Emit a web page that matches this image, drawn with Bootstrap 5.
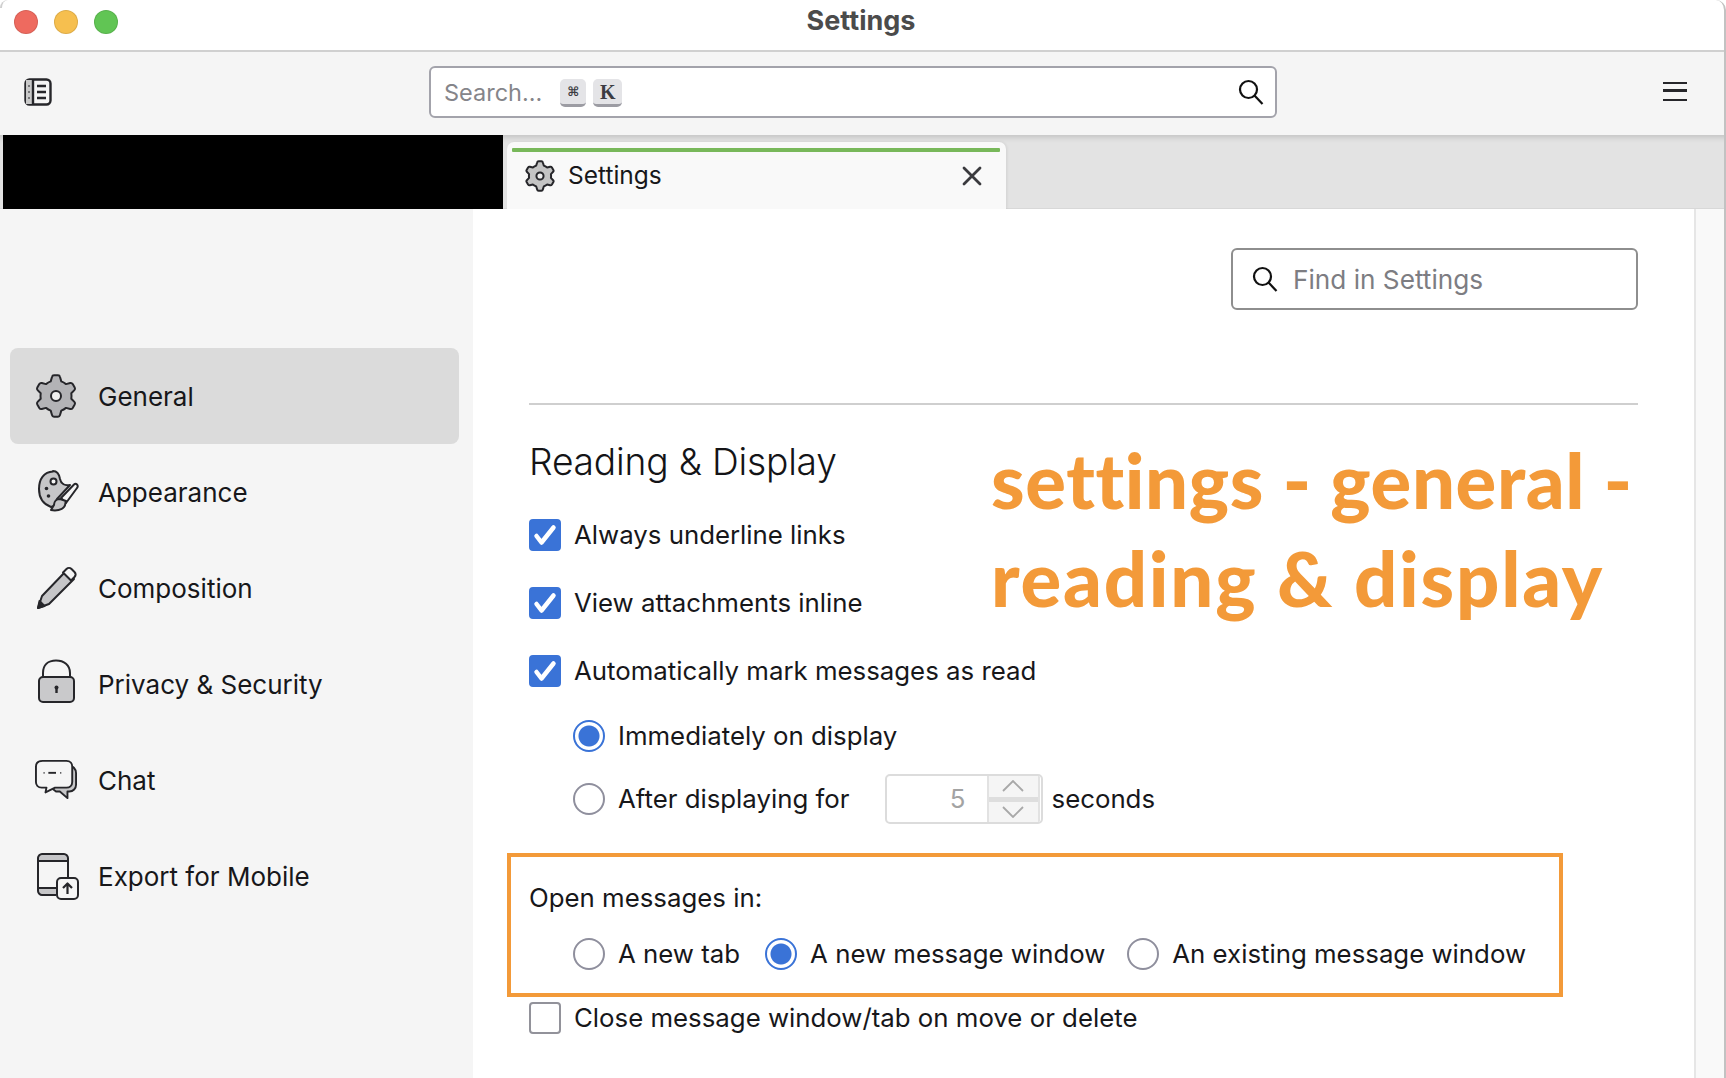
<!DOCTYPE html>
<html lang="en">
<head>
<meta charset="utf-8">
<title>Settings</title>
<link href="https://cdn.jsdelivr.net/npm/bootstrap@5.3.0/dist/css/bootstrap.min.css" rel="stylesheet">
<style>
html,body{height:100%;overflow:hidden;}
body{font-family:Inter,"Liberation Sans",sans-serif;font-size:25.8px;color:#17171a;background:#fff;}
.app-win{height:1078px;width:1726px;overflow:hidden;position:relative;}
.win-frame{position:absolute;top:0;right:0;bottom:0;width:14px;border-right:2px solid #c2c2c2;border-top-right-radius:10px;pointer-events:none;}
.win-corner{position:absolute;top:0;left:0;width:8px;height:8px;border-left:2px solid #cfcfcf;border-top-left-radius:8px;}
.title-bar{height:52px;border-bottom:2px solid #d0d0d0;background:#fff;display:grid;grid-template-columns:1fr auto 1fr;align-items:center;padding:0 0 7px 14px;}
.lights{gap:16px;}
.light{width:24px;height:24px;border-radius:50%;border:1px solid rgba(0,0,0,.1);}
.light-r{background:#ee6a5f;}.light-y{background:#f6bf4f;}.light-g{background:#61c554;}
.win-title{font-size:27px;font-weight:700;color:#4b4b4b;line-height:1;margin-left:-18px;padding-bottom:2px;}
.tool-bar{height:83px;background:#f5f5f5;padding:0 39px 3px 24px;}
.tool-side{width:405px;}
.omni{width:848px;height:52px;background:#fff;border:2px solid #a3a3ab;border-radius:6px;padding:2px 11px 0 13px;color:#85858a;font-size:23.5px;}
.key{height:28px;border-radius:5px;background:#e4e4e7;border-bottom:3px solid #9c9ca3;color:#3c3c42;font-size:15px;line-height:1;font-weight:700;display:flex;align-items:center;justify-content:center;}
.key-a{width:26px;margin-left:18px;font-family:"DejaVu Sans",sans-serif;font-size:13px;}
.key-b{width:29px;margin-left:7px;font-family:"Liberation Serif",serif;font-size:20px;}
.omni-ic{width:26px;height:26px;margin-top:-3px;}
.menu-btn{width:24px;height:19px;border-top:2.500px solid #26262a;border-bottom:2.500px solid #26262a;position:relative;margin-top:-2px;}
.menu-btn::after{content:"";position:absolute;left:0;right:0;top:5.500px;height:2.500px;background:#26262a;}
.tab-strip{height:74px;background:#e3e3e3;box-shadow:inset 0 7px 6px -5px rgba(0,0,0,.16);border-bottom:1px solid #d8d8d8;padding-left:3px;}
.redacted{width:500px;height:74px;background:#000;margin-bottom:-1px;}
.tab-item{width:499px;height:67px;margin:0 0 -1px 4px;background:#f9f9f9;border-radius:7px 7px 0 0;padding:6px 6px 0 5px;box-shadow:1px 0 3px rgba(0,0,0,.08);}
.tab-line{height:4px;background:#78b85a;border-radius:1px;}
.tab-body{padding:0 18px 0 13px;height:48px;font-size:24.500px;}
.tab-body span{margin-left:13px;line-height:1;padding-bottom:2px;}
.main-area{height:869px;}
.side-nav{width:473px;background:#f5f5f5;padding:139px 14px 0 10px;flex:none;}
.nav-row{height:96px;border-radius:8px;padding-left:25px;font-size:26px;color:#17171a;gap:21px;}
.nav-row.on{background:#dbdbdb;}
.nav-ic{width:42px;height:44px;flex:none;overflow:visible;}
.pane{flex:1;background:#fff;padding:39px 56px 0 56px;position:relative;}
.find{width:407px;height:62px;border:2px solid #8e8e8e;border-radius:6px;margin-left:auto;padding:2px 0 0 19px;color:#7d7d82;font-size:26.2px;gap:15px;}
.find svg{margin-top:-2px;}
.rule{height:2px;background:#cfcfcf;margin:93px 0 0;opacity:1;border:0;}
.sec-title{font-size:37.200px;font-weight:300;line-height:1;margin:38px 0 0;color:#141417;letter-spacing:-.2px;}
.line{height:32px;line-height:32px;gap:13px;}
.form-check-input.chk{width:32px;height:32px;margin:0;border:2px solid #92929a;border-radius:4px;flex:none;background-size:32px;}
.form-check-input.chk:checked{background-color:#3a73d7;border-color:#3a73d7;background-image:url("data:image/svg+xml,%3csvg xmlns='http://www.w3.org/2000/svg' viewBox='0 0 32 32'%3e%3cpath fill='none' stroke='%23fff' stroke-width='4.500' stroke-linecap='round' stroke-linejoin='round' d='M7.500 17l5 6.500L24.500 8.500'/%3e%3c/svg%3e");}
.form-check-input.rad{width:32px;height:32px;margin:0;border:2px solid #8f8f9d;flex:none;background-color:#fff;}
.form-check-input.rad:checked{border-color:#3a73d7;background-color:#fff;background-image:radial-gradient(circle,#3a73d7 0,#3a73d7 10px,#fff 11px);}
.stack-a{margin-top:39px;}
.stack-b{margin-top:36px;}
.ind{padding-left:44px;}
.opt-first{margin-top:33px;}
.opt-gap{margin-top:31px;}
.stepper{width:158px;height:50px;flex:none;border:2px solid #dcdcdc;border-radius:5px;margin:0 -4px 0 22px;color:#a3a3a3;overflow:hidden;}
.step-val{flex:1;text-align:right;padding-right:21px;line-height:46px;}
.step-btns{width:53px;border-left:2px solid #e2e2e2;background:#f5f5f5;border-right:2px solid #e2e2e2;margin-right:1px;}
.step-btn{flex:1;display:flex;align-items:center;justify-content:center;}
.step-btn+.step-btn{border-top:5px solid #dedede;}
.marked{border:4px solid #f39a39;width:1056px;height:144px;margin:38px 0 0 -22px;padding:25px 0 0 18px;}
.marked-label{line-height:32px;}
.radio-row{margin-top:24px;padding-left:44px;}
.radio-row .line + .line{margin-left:22px;}
.radio-row .line:first-child{margin-right:3px;}
.after-box{margin-top:5px;}
.annot{position:absolute;left:518px;top:222px;font-family:Lato,sans-serif;font-weight:900;font-size:76px;line-height:98px;color:#f39a39;white-space:nowrap;font-variant-ligatures:none;}
.annot-a{display:block;letter-spacing:.6px;}
.annot-b{display:block;letter-spacing:1.750px;}
.scroll-gut{width:32px;background:#f9f9f9;border-left:2px solid #e6e6e6;flex:none;}
</style>
</head>
<body>
<div class="app-win">
  <div class="title-bar">
    <div class="d-flex lights"><span class="light light-r"></span><span class="light light-y"></span><span class="light light-g"></span></div>
    <div class="win-title">Settings</div>
    <div></div>
  </div>
  <div class="tool-bar d-flex align-items-center">
    <div class="tool-side">
      <svg width="28" height="28" viewBox="0 0 28 28" fill="none" stroke="#26262a" stroke-width="2.4" class="d-block"><rect x="1.5" y="1.5" width="25" height="25" rx="4"/><rect x="2" y="2" width="7" height="24" fill="#c9c9c9" stroke="none"/><path d="M9 2v24M13 8h9M13 14h9M13 20h9"/><path d="M5 7.500v1M5 13.500v1M5 19.500v1" stroke-width="2"/></svg>
    </div>
    <div class="omni d-flex align-items-center">
      <span>Search...</span><span class="key key-a">⌘</span><span class="key key-b">K</span>
      <svg class="omni-ic ms-auto" viewBox="0 0 26 26" fill="none" stroke="#111" stroke-width="2.2"><circle cx="10.500" cy="10.500" r="8.500"/><path d="M16.500 16.500l8 8.500"/></svg>
    </div>
    <div class="ms-auto menu-btn"></div>
  </div>
  <div class="tab-strip d-flex align-items-end">
    <div class="redacted"></div>
    <div class="tab-item">
      <div class="tab-line"></div>
      <div class="tab-body d-flex align-items-center">
        <svg width="30" height="32" viewBox="0 0 42 44" fill="#c4c4c4" stroke="#26262a" stroke-width="2.8" stroke-linejoin="round"><use href="#gear-shape"/></svg>
        <span>Settings</span>
        <svg class="ms-auto" width="20" height="20" viewBox="0 0 20 20" stroke="#3a3a3e" stroke-width="2.8" fill="none" stroke-linecap="round"><path d="M2 2l16 16M18 2L2 18"/></svg>
      </div>
    </div>
  </div>
  <div class="main-area d-flex">
    <nav class="side-nav">
      <div class="nav-row on d-flex align-items-center">
        <svg class="nav-ic" viewBox="0 0 42 44" fill="#b3b3b6" stroke="#26262a" stroke-width="2" stroke-linejoin="round"><g id="gear-shape"><path d="M15.700 7.400L17 3Q17.400 1.300 19 1.300H23Q24.600 1.300 25 3L26.300 7.400Q28.700 8.300 31 10.100L35.200 9Q36.800 8.600 37.700 10L39.700 13.500Q40.500 15 39.400 16.100L36.300 19.300Q36.700 22 36.300 24.700L39.400 27.900Q40.500 29 39.700 30.500L37.700 34Q36.800 35.400 35.200 35L31 33.900Q28.700 35.700 26.300 36.600L25 41Q24.600 42.700 23 42.700H19Q17.400 42.700 17 41L15.700 36.600Q13.300 35.700 11 33.900L6.800 35Q5.200 35.400 4.300 34L2.300 30.500Q1.500 29 2.600 27.900L5.700 24.700Q5.300 22 5.700 19.300L2.600 16.100Q1.500 15 2.300 13.500L4.300 10Q5.200 8.600 6.800 9L11 10.100Q13.300 8.300 15.700 7.400Z"/><circle cx="21" cy="22" r="5" fill="#efefef"/></g></svg>
        <span>General</span>
      </div>
      <div class="nav-row d-flex align-items-center">
        <svg class="nav-ic" viewBox="-1 0 42 44" fill="none" stroke="#26262a" stroke-width="2" stroke-linejoin="round"><path d="M17 1.500C8 2 3 9 3 19c0 8 4 15 12 18l3-1 3-7 13-14c-5 1-9-1-10-6-1-6-3-8-7-8z" fill="#c6c6c8"/><circle cx="17.500" cy="11.500" r="3" fill="#f5f5f5"/><circle cx="10.500" cy="18.500" r="1.800" fill="#26262a" stroke="none"/><circle cx="12.500" cy="26" r="1.800" fill="#26262a" stroke="none"/><path d="M41 14.500c-1-1-2-1-3 0L25 28l5 5 11-15c1-1 1-2.500 0-3.500z" fill="#f5f5f5"/><path d="M24 29c-4 0-6 3-6 6l-3 5c5 1 11 0 13-3 2-2 1-5 2-6z" fill="#c6c6c8"/></svg>
        <span>Appearance</span>
      </div>
      <div class="nav-row d-flex align-items-center">
        <svg class="nav-ic" viewBox="0 0 42 44" fill="#c6c6c8" stroke="#26262a" stroke-width="2" stroke-linejoin="round"><path d="M7 30L31 5l8 8-25 25-11 4z"/><path d="M29 7.500l3.500-3.500c1.500-1.500 3.500-1.500 5 0l3 3c1.500 1.500 1.500 3.500 0 5L37 15.500z" fill="#f5f5f5" transform="translate(-1 -1)"/><path d="M3 42l1.500-7 5 5z" fill="#26262a"/></svg>
        <span>Composition</span>
      </div>
      <div class="nav-row d-flex align-items-center">
        <svg class="nav-ic" viewBox="0 3 42 44" fill="none" stroke="#26262a" stroke-width="2" stroke-linejoin="round"><path d="M8 18v-4C8 6 13 1.500 21 1.500S35 6 35 14v4"/><rect x="4" y="18" width="35" height="25" rx="4" fill="#c9c9cb"/><circle cx="21.500" cy="28.500" r="2" fill="#26262a" stroke="none"/><path d="M21.500 29v5" stroke-width="2.400"/></svg>
        <span>Privacy &amp; Security</span>
      </div>
      <div class="nav-row d-flex align-items-center">
        <svg class="nav-ic" viewBox="0 0 44 42" fill="none" stroke="#26262a" stroke-width="2" stroke-linejoin="round"><path d="M34 5c5 1 9 4 9 9v12c0 4-3 7-7 7h-2v7l-8-7h-4l-4-3z" fill="#c6c6c8"/><path d="M8 1h25c4 0 6 3 6 6v16c0 4-3 6-6 6H21l-10 5 1-5H7c-4 0-6-3-6-6V7c0-4 3-6 7-6z" fill="#f5f5f5"/><path d="M14 13.500h8" stroke-width="2"/><path d="M9 13.500h1M26.500 13.500h1" stroke-width="2"/></svg>
        <span>Chat</span>
      </div>
      <div class="nav-row d-flex align-items-center">
        <svg class="nav-ic" viewBox="0 1 42 44" fill="none" stroke="#26262a" stroke-width="2" stroke-linejoin="round"><path d="M7 1h22c2 0 4 2 4 4v3H3V5c0-2 2-4 4-4z" fill="#c6c6c8" stroke="none"/><path d="M3 35h19v7H7c-2 0-4-2-4-4z" fill="#c6c6c8" stroke="none"/><path d="M21 42H7c-2 0-4-2-4-4V5c0-2 2-4 4-4h22c2 0 4 2 4 4v20M3 8h30M3 35h18"/><rect x="22" y="25" width="21" height="21" rx="4" fill="#f5f5f5"/><path d="M32.500 41V31M28 35l4.500-4.500L37 35" stroke-width="2.200"/></svg>
        <span>Export for Mobile</span>
      </div>
    </nav>
    <section class="pane">
      <div class="find d-flex align-items-center">
        <svg width="26" height="26" viewBox="0 0 26 26" fill="none" stroke="#111" stroke-width="2.2"><circle cx="10.500" cy="10.500" r="8.500"/><path d="M16.500 16.500l8 8.500"/></svg>
        <span>Find in Settings</span>
      </div>
      <hr class="rule">
      <h2 class="sec-title">Reading &amp; Display</h2>
      <div class="annot"><span class="annot-a">settings - general -</span><span class="annot-b">reading &amp; display</span></div>
      <label class="line d-flex align-items-center stack-a"><input class="form-check-input chk" type="checkbox" checked>Always underline links</label>
      <label class="line d-flex align-items-center stack-b"><input class="form-check-input chk" type="checkbox" checked>View attachments inline</label>
      <label class="line d-flex align-items-center stack-b"><input class="form-check-input chk" type="checkbox" checked>Automatically mark messages as read</label>
      <div class="ind">
        <label class="line d-flex align-items-center opt-first"><input class="form-check-input rad" type="radio" name="mark" checked>Immediately on display</label>
        <div class="line d-flex align-items-center opt-gap">
          <input class="form-check-input rad" type="radio" name="mark" aria-label="After displaying for"><span>After displaying for</span>
          <div class="stepper d-flex">
            <div class="step-val">5</div>
            <div class="step-btns d-flex flex-column">
              <div class="step-btn"><svg width="22" height="12" viewBox="0 0 22 12" fill="none" stroke="#a8a8a8" stroke-width="1.800"><path d="M1 11L11 1l10 10"/></svg></div>
              <div class="step-btn"><svg width="22" height="12" viewBox="0 0 22 12" fill="none" stroke="#a8a8a8" stroke-width="1.800"><path d="M1 1l10 10L21 1"/></svg></div>
            </div>
          </div>
          <span>seconds</span>
        </div>
      </div>
      <div class="marked">
        <div class="marked-label">Open messages in:</div>
        <div class="radio-row d-flex">
          <label class="line d-flex align-items-center"><input class="form-check-input rad" type="radio" name="open">A new tab</label>
          <label class="line d-flex align-items-center"><input class="form-check-input rad" type="radio" name="open" checked>A new message window</label>
          <label class="line d-flex align-items-center"><input class="form-check-input rad" type="radio" name="open">An existing message window</label>
        </div>
      </div>
      <label class="line d-flex align-items-center after-box"><input class="form-check-input chk" type="checkbox">Close message window/tab on move or delete</label>
    </section>
    <div class="scroll-gut"></div>
  </div>
  <div class="win-frame"></div>
  <div class="win-corner"></div>
</div>
<script src="https://cdn.jsdelivr.net/npm/bootstrap@5.3.0/dist/js/bootstrap.bundle.min.js"></script>
</body>
</html>
